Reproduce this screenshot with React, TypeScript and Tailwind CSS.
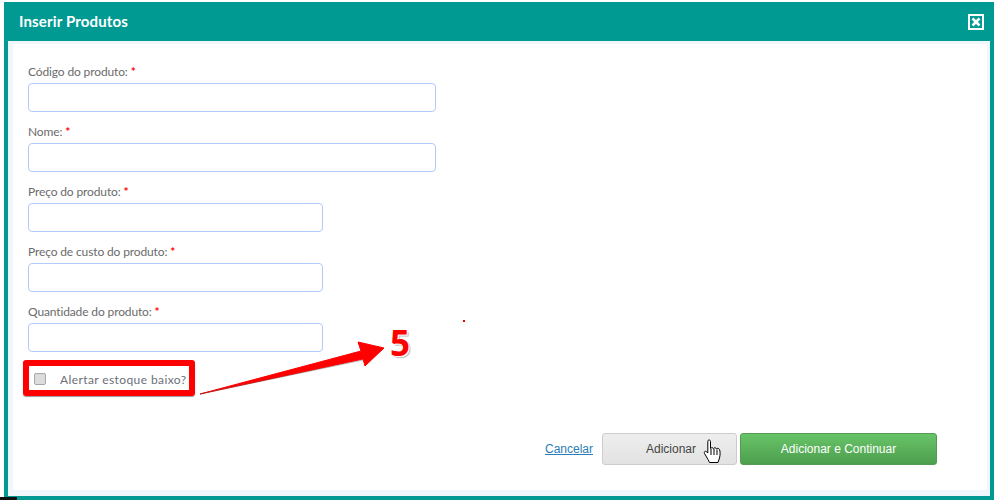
import { FC } from "react";

type FieldProps = {
  label: string;
  short?: boolean;
};

const Field: FC<FieldProps> = ({ label, short }) => (
  <div className="h-[60px] pt-[1px]">
    <label className="block h-[20px] text-[12px] leading-[18px] tracking-[-0.13px] text-[#6b6b6b]">
      {label} <span className="font-bold text-[#ff0000]">*</span>
    </label>
    <input
      type="text"
      className={`block h-[29px] rounded-[4px] border border-[#b3cbfa] bg-white ${short ? "w-[295px]" : "w-[408px]"}`}
    />
  </div>
);

const CloseIcon = () => (
  <svg width="16" height="16" viewBox="0 0 16 16" className="block">
    <rect x="1" y="1" width="14" height="14" fill="none" stroke="#ffffff" strokeWidth="2" />
    <path d="M4.500 4.500 L11.500 11.500 M11.500 4.500 L4.500 11.500" stroke="#ffffff" strokeWidth="2.600" strokeLinecap="butt" />
  </svg>
);

const HandCursor = () => (
  <svg width="19" height="27" viewBox="0 0 19 27" className="absolute left-[703px] top-[439px]">
    <path
      d="M5 1.500c1 -1 2.500 -.5 2.500 1v7c.5 -1 2.500 -1 3 0 .5 -1 2.500 -1 3 .3 .7 -.8 2.500 -.5 3 .7 .8 1.500 .8 6 0 8.500l-1.500 4.500H6.500l-1.500 -3 -3.500 -6c-.8 -1.500 .8 -3 2 -1.800l1.300 1.300V2.500z"
      fill="#ffffff"
      stroke="#000000"
      strokeWidth="1"
      strokeLinejoin="round"
    />
    <path d="M8 10v6M11 10v6M14 10.500v5.500" stroke="#000000" strokeWidth="1" fill="none" />
  </svg>
);

const Arrow = () => (
  <svg width="200" height="60" viewBox="0 0 200 60" className="absolute left-[195px] top-[340px]">
    <polygon
      points="5,54 166,11 163,2 189,8 170,26 168,19"
      fill="#ff0000"
      stroke="#ff0000"
      strokeWidth="1"
      strokeLinejoin="round"
    />
    <path d="M5 54 L168 20" stroke="#555555" strokeWidth="0.8" opacity="0.5" />
  </svg>
);

export default function App() {
  return (
    <div className="relative h-[500px] w-[994px] overflow-hidden bg-white pl-[4px] pt-[2px] font-['Lato',sans-serif]">
      <div className="flex h-[498px] w-[990px] flex-col bg-[#009a93]">
        <div className="flex h-[39px] items-center justify-between pl-[15px] pr-[10px]">
          <h1 className="text-[15px] font-bold tracking-[0.15px] text-white">Inserir Produtos</h1>
          <CloseIcon />
        </div>
        <div className="mx-[4px] mb-[4px] flex-1 bg-[#f0f7fc] pb-[6px] pl-[5px] pr-[3px] pt-[3px]">
          <div className="flex h-full flex-col bg-white pl-[15px] pr-[50px] pt-[18px]">
            <Field label="Código do produto:" />
            <Field label="Nome:" />
            <Field label="Preço do produto:" short />
            <Field label="Preço de custo do produto:" short />
            <Field label="Quantidade do produto:" short />
            <div className="mt-[5px] flex h-[24px] items-center pl-[6px]">
              <span className="h-[12px] w-[12px] rounded-[2px] border border-[#a8a8a8] bg-[#dcdcdc]" />
              <span className="ml-[14px] translate-y-[1px] text-[12px] font-normal tracking-[0.4px] text-[#6b6f78]">Alertar estoque baixo?</span>
            </div>
            <div className="mt-[42px] flex items-center justify-end">
              <a href="#" className="mr-[9px] font-['Liberation_Sans',sans-serif] text-[12px] text-[#2a7db5] underline">
                Cancelar
              </a>
              <button className="h-[32px] w-[135px] rounded-[3px] border border-[#cccccc] bg-gradient-to-b from-[#eeeeee] to-[#e2e2e2] pl-[3px] font-['Liberation_Sans',sans-serif] text-[12px] text-[#444444]">
                Adicionar
              </button>
              <button className="ml-[3px] h-[32px] w-[197px] rounded-[3px] border border-[#549a53] bg-gradient-to-b from-[#68c468] to-[#4d9f4d] font-['Liberation_Sans',sans-serif] text-[12px] text-white">
                Adicionar e Continuar
              </button>
            </div>
          </div>
        </div>
      </div>

      {/* anotacoes por cima do print */}
      <div className="absolute left-[23px] top-[360px] h-[36px] w-[172px] rounded-[3px] border-[6px] border-[#ff0000] shadow-[0_1px_1px_rgba(0,0,0,0.4)]" />
      <Arrow />
      <span className="absolute left-[390px] top-[321px] font-['Open_Sans',sans-serif] text-[35px] font-bold leading-[44px] text-[#ff0000] [text-shadow:1px_1px_0_#ffffff,2px_2px_1px_#bbbbbb]">
        5
      </span>
      <div className="absolute left-[463px] top-[320px] h-[2px] w-[2px] bg-[#e00000]" />
      <HandCursor />
      <div className="absolute bottom-0 left-0 h-[3px] w-[17px] bg-[#111111]" />
    </div>
  );
}
